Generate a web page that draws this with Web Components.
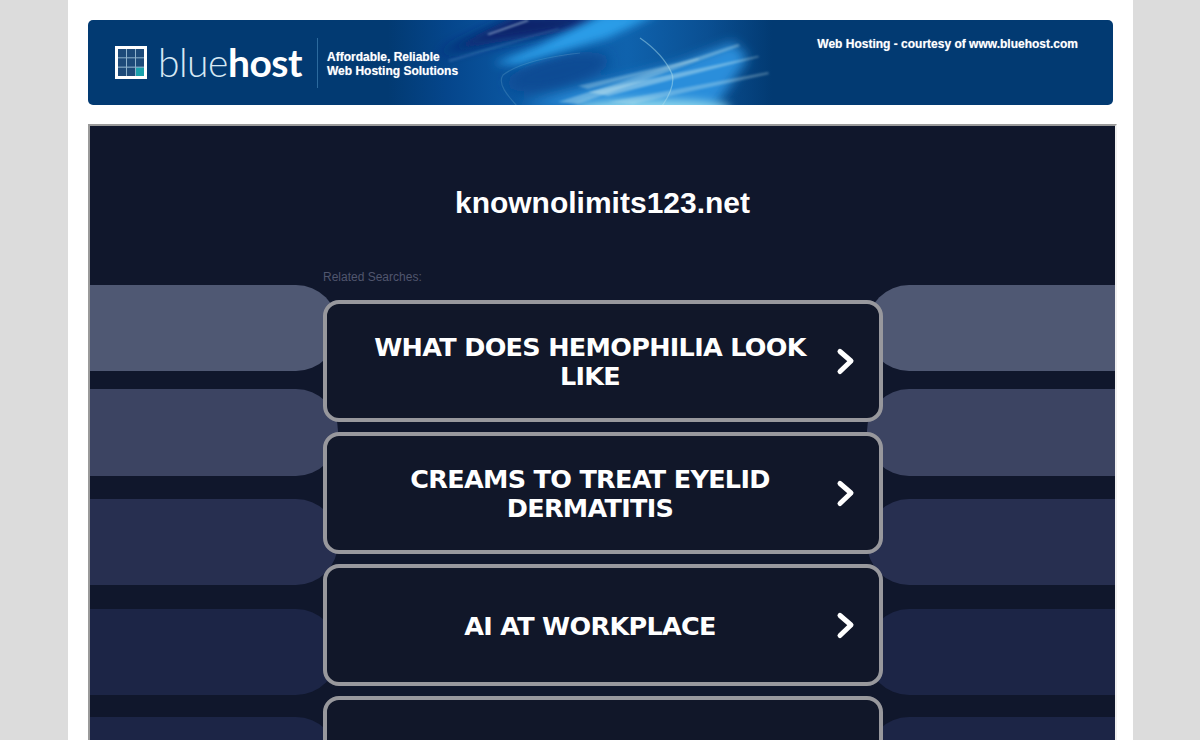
<!DOCTYPE html>
<html>
<head>
<meta charset="utf-8">
<title>knownolimits123.net</title>
<style>
  html, body { margin: 0; height: 740px; overflow: hidden; background: #dcdcdc; }
</style>
</head>
<body>

<template id="hosting-page-tpl">
  <style>
    :host { display: block; width: 1025px; height: 740px; margin-left: 68px; padding: 20px 20px 0; background: #fff; overflow: hidden; }
    ::slotted(hosting-banner) { margin-bottom: 19px; }
  </style>
  <slot></slot>
</template>

<template id="hosting-banner-tpl">
  <style>
    :host { display: block; position: relative; width: 1025px; height: 85px; border-radius: 5px; overflow: hidden; background: #023a72; font: bold 12px "Liberation Sans", Arial, sans-serif; color: #fff; }
    .art { position: absolute; left: 0; top: 0; }
    .content { position: relative; display: flex; align-items: center; height: 100%; }
    .logo { display: flex; align-items: center; margin-left: 27px; width: 202px; }
    .logo svg { flex: none; margin-right: 11px; }
    .word { font: 300 39px/1 Lato, "Open Sans", sans-serif; color: #d6e8f4; letter-spacing: -0.5px; white-space: nowrap; }
    .word b { font-weight: 700; color: #fff; }
    .rule { width: 1px; height: 50px; background: #2c6a9e; margin-right: 9px; }
    .tag { line-height: 14px; white-space: nowrap; padding-top: 2px; text-shadow: 0 0 1px rgba(255,255,255,.5); }
    .courtesy { position: absolute; right: 35px; top: 17px; white-space: nowrap; text-shadow: 0 0 1px rgba(255,255,255,.5); }
  </style>
  <svg class="art" width="1025" height="85" viewBox="0 0 1025 85">
    <defs>
      <linearGradient id="base" x1="0" x2="1" y1="0" y2="0">
        <stop offset="0" stop-color="#023a72"/>
        <stop offset=".15" stop-color="#05468c"/>
        <stop offset=".3" stop-color="#0a559f"/>
        <stop offset=".6" stop-color="#0f62ad"/>
        <stop offset=".8" stop-color="#0a4f92"/>
        <stop offset=".96" stop-color="#023a72"/>
      </linearGradient>
      <filter id="b6" x="-30%" y="-60%" width="160%" height="220%"><feGaussianBlur stdDeviation="6"/></filter>
      <filter id="b3" x="-30%" y="-60%" width="160%" height="220%"><feGaussianBlur stdDeviation="4"/></filter>
      <filter id="b1" x="-10%" y="-30%" width="120%" height="160%"><feGaussianBlur stdDeviation="1.3"/></filter>
    </defs>
    <rect x="300" width="400" height="85" fill="url(#base)"/>
    <g filter="url(#b6)">
      <path d="M430 -6 L520 -6 L490 10 L400 24 L350 34Z" fill="#08246a"/>
      <ellipse cx="470" cy="52" rx="52" ry="16" transform="rotate(-14 470 52)" fill="#0a4c94"/>
      <path d="M430 86 L590 44 L645 22 L660 38 L625 90Z" fill="#2a8edb"/>
    </g>
    <g filter="url(#b3)">
      <path d="M515 -6 L570 -6 L520 18 L430 44 L405 44 L450 26Z" fill="#2a9de8"/>
      <ellipse cx="565" cy="88" rx="78" ry="9" fill="#86d2ec"/>
    </g>
    <g filter="url(#b1)">
      <path d="M399 14 L439 0 L441 1 L401 15Z" fill="#cfe6f6" fill-opacity=".55"/>
      <path d="M360 40 L470 8 L471 9 L362 42Z" fill="#9cc6ea" fill-opacity=".2"/>
      <path d="M470 82 L650 24 L652 26 L490 84Z" fill="#cdeef2" fill-opacity=".35"/>
      <path d="M500 72 L670 36 L671 37 L520 76Z" fill="#d8f2f2" fill-opacity=".4"/>
      <path d="M490 66 L610 38 L611 40 L500 69Z" fill="#d8f2f2" fill-opacity=".3"/>
      <path d="M520 82 L680 52 L681 54 L545 84Z" fill="#d8f2f2" fill-opacity=".3"/>
    </g>
    <path d="M552 18 C565 27 578 40 584 54 C587 64 581 76 574 86" fill="none" stroke="#a8dcec" stroke-opacity=".5" stroke-width="1.3"/>
    <path d="M492 33 C465 36 432 42 415 55 C409 64 420 76 429 86" fill="none" stroke="#8cc8e0" stroke-opacity=".22" stroke-width="1.2"/>
  </svg>
  <div class="content">
    <div class="logo">
      <svg width="32" height="33" viewBox="0 0 32 33">
        <rect width="32" height="33" fill="#fff"/>
        <rect x="3" y="3" width="26" height="27" fill="#8fb2cc"/>
        <g fill="#1d4a79">
          <rect x="3" y="3" width="8" height="8.3"/><rect x="12" y="3" width="8" height="8.3"/><rect x="21" y="3" width="8" height="8.3"/>
          <rect x="3" y="12.3" width="8" height="8.3"/><rect x="12" y="12.3" width="8" height="8.3"/><rect x="21" y="12.3" width="8" height="8.3"/>
          <rect x="3" y="21.7" width="8" height="8.3"/><rect x="12" y="21.7" width="8" height="8.3"/>
        </g>
        <rect x="21" y="21.7" width="8" height="8.3" fill="#19a0ab"/>
      </svg>
      <span class="word">blue<b>host</b></span>
    </div>
    <div class="rule"></div>
    <div class="tag"><slot name="tagline"></slot></div>
  </div>
  <div class="courtesy"><slot name="courtesy"></slot></div>
</template>

<template id="bg-pills-tpl">
  <style>
    :host { display: flex; justify-content: space-between; position: absolute; left: 0; top: 0; right: 0; bottom: 0; overflow: hidden; }
    .col { display: flex; flex-direction: column; width: 248px; padding-top: 159px; }
    .pill { height: 86px; flex: none; }
    .l .pill { border-radius: 0 42px 42px 0; }
    .r .pill { border-radius: 42px 0 0 42px; }
    .a { background: #4f5873; margin-bottom: 18px; }
    .b { background: #3c4462; margin-bottom: 23px; height: 87px; }
    .c { background: #272f50; margin-bottom: 24px; }
    .d { background: #1c2546; margin-bottom: 22px; }
    .e { background: #1c2546; }
  </style>
  <div class="col l"><div class="pill a"></div><div class="pill b"></div><div class="pill c"></div><div class="pill d"></div><div class="pill e"></div></div>
  <div class="col r"><div class="pill a"></div><div class="pill b"></div><div class="pill c"></div><div class="pill d"></div><div class="pill e"></div></div>
</template>

<template id="search-card-tpl">
  <style>
    :host { display: flex; align-items: center; box-sizing: border-box; width: 560px; height: 122px; margin-bottom: 10px; border: 4px solid #98989d; border-radius: 16px; background: #111729; color: #fff; padding: 0 24px 0 40px; font: bold 25.5px/29px "DejaVu Sans", Verdana, sans-serif; letter-spacing: -0.7px; }
    .text { flex: 1; text-align: center; text-transform: uppercase; padding-top: 2px; }
    svg { flex: none; margin-left: 22px; }
  </style>
  <div class="text"><slot></slot></div>
  <svg width="20" height="30" viewBox="0 0 20 30"><path d="M5 5.5 L16 15 L5 25.5" fill="none" stroke="#fff" stroke-width="5" stroke-linecap="round" stroke-linejoin="round"/></svg>
</template>

<template id="parked-panel-tpl">
  <style>
    :host { display: block; position: relative; width: 1025px; height: 640px; border: 2px solid; border-color: #9a9a9a #f0f0f0 #f0f0f0 #9a9a9a; background: #10172c; overflow: hidden; }
    .inner { position: relative; display: flex; flex-direction: column; align-items: flex-start; padding: 58px 0 0 233px; }
    h1 { margin: 0 0 48px; width: 559px; text-align: center; color: #fff; font: bold 30px/38px "Liberation Sans", Arial, sans-serif; }
    .related { color: #50566e; font: 12px/14px "Liberation Sans", Arial, sans-serif; margin-bottom: 16px; }
  </style>
  <bg-pills></bg-pills>
  <div class="inner">
    <h1><slot name="domain"></slot></h1>
    <div class="related"><slot name="label"></slot></div>
    <slot></slot>
  </div>
</template>

<hosting-page>
  <hosting-banner>
    <span slot="tagline">Affordable, Reliable<br>Web Hosting Solutions</span>
    <span slot="courtesy">Web Hosting - courtesy of www.bluehost.com</span>
  </hosting-banner>
  <parked-panel>
    <span slot="domain">knownolimits123.net</span>
    <span slot="label">Related Searches:</span>
    <search-card>What does hemophilia look like</search-card>
    <search-card>Creams to treat eyelid dermatitis</search-card>
    <search-card>AI at workplace</search-card>
    <search-card></search-card>
  </parked-panel>
</hosting-page>

<script>
function define(name, tplId) {
  customElements.define(name, class extends HTMLElement {
    constructor() {
      super();
      this.attachShadow({mode: 'open'}).appendChild(document.getElementById(tplId).content.cloneNode(true));
    }
  });
}
define('hosting-page', 'hosting-page-tpl');
define('hosting-banner', 'hosting-banner-tpl');
define('bg-pills', 'bg-pills-tpl');
define('search-card', 'search-card-tpl');
define('parked-panel', 'parked-panel-tpl');
</script>
</body>
</html>
